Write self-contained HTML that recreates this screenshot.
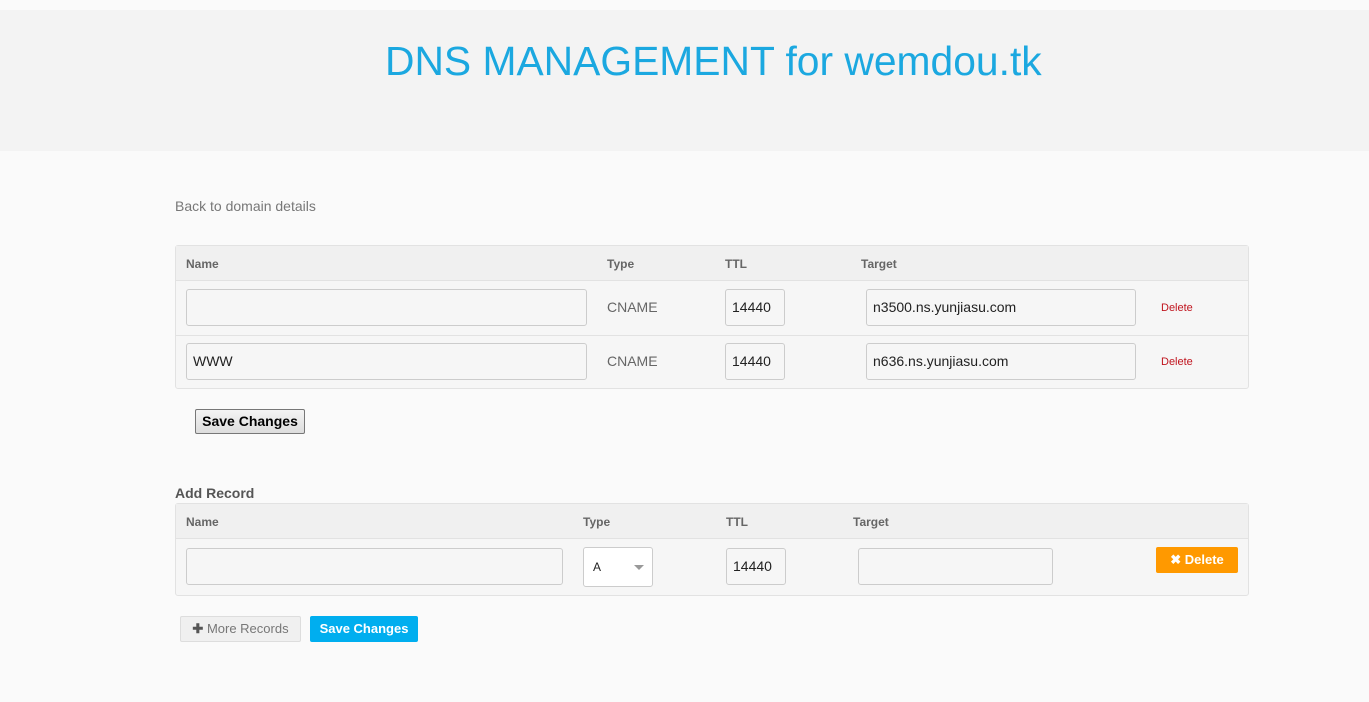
<!DOCTYPE html>
<html><head><style>
*{box-sizing:border-box;margin:0;padding:0}
body{width:1369px;height:702px;background:#fafafa;font-family:"Liberation Sans",sans-serif;position:relative;overflow:hidden}
.a{position:absolute}
.hdr{left:0;top:10px;width:1369px;height:141px;background:#f3f3f3}
h1{position:absolute;left:385px;width:660px;top:38px;white-space:nowrap;font-weight:normal;font-size:40.8px;color:#1ba8e0;font-family:"Liberation Sans",sans-serif}
.tbl{left:175px;width:1074px;border:1px solid #e2e2e2;border-radius:3px;background:#f6f6f6}
.th{position:absolute;left:0;right:0;top:0;height:35px;background:#f0f0f0;border-bottom:1px solid #e2e2e2}
.lbl{font-size:12px;color:#666;font-weight:bold}
.inp{position:absolute;border:1px solid #ccc;border-radius:3px;background:#f6f6f6;font-size:14px;color:#222;padding-left:6px;line-height:35px}
.cn{font-size:14px;color:#666}
.del{font-size:11px;color:#c0141e}
</style></head><body>
<div class="a hdr"></div>
<h1>DNS MANAGEMENT for wemdou.tk</h1>
<div class="a" style="left:175px;top:198px;font-size:14px;color:#777">Back to domain details</div>

<div class="a tbl" style="top:245px;height:144px">
 <div class="th"></div>
 <div style="position:absolute;left:0;right:0;top:89px;border-top:1px solid #e2e2e2"></div>
 <div class="a lbl" style="left:10px;top:11px">Name</div>
 <div class="a lbl" style="left:431px;top:11px">Type</div>
 <div class="a lbl" style="left:549px;top:11px">TTL</div>
 <div class="a lbl" style="left:685px;top:11px">Target</div>
 <div class="inp" style="left:10px;top:43px;width:401px;height:37px"></div>
 <div class="a cn" style="left:431px;top:53px">CNAME</div>
 <div class="inp" style="left:549px;top:43px;width:60px;height:37px">14440</div>
 <div class="inp" style="left:690px;top:43px;width:270px;height:37px">n3500.ns.yunjiasu.com</div>
 <div class="a del" style="left:985px;top:56px">Delete</div>
 <div class="inp" style="left:10px;top:97px;width:401px;height:37px">WWW</div>
 <div class="a cn" style="left:431px;top:107px">CNAME</div>
 <div class="inp" style="left:549px;top:97px;width:60px;height:37px">14440</div>
 <div class="inp" style="left:690px;top:97px;width:270px;height:37px">n636.ns.yunjiasu.com</div>
 <div class="a del" style="left:985px;top:110px">Delete</div>
</div>

<div class="a" style="left:195px;top:409px;width:110px;height:25px;border:1px solid #777;background:linear-gradient(#f4f4f4,#ddd);font-size:14px;font-weight:bold;color:#000;text-align:center;line-height:23px;border-radius:2px">Save Changes</div>

<div class="a" style="left:175px;top:485px;font-size:14px;font-weight:bold;color:#555">Add Record</div>
<div class="a tbl" style="top:503px;height:93px">
 <div class="th"></div>
 <div class="a lbl" style="left:10px;top:11px">Name</div>
 <div class="a lbl" style="left:407px;top:11px">Type</div>
 <div class="a lbl" style="left:550px;top:11px">TTL</div>
 <div class="a lbl" style="left:677px;top:11px">Target</div>
 <div class="inp" style="left:10px;top:44px;width:377px;height:37px"></div>
 <div class="inp" style="left:407px;top:43px;width:70px;height:40px;background:#fff;font-size:12px;line-height:38px;padding-left:9px">A<span style="position:absolute;left:50px;top:17px;border:5px solid transparent;border-top-color:#999;border-bottom:0"></span></div>
 <div class="inp" style="left:550px;top:44px;width:60px;height:37px">14440</div>
 <div class="inp" style="left:682px;top:44px;width:195px;height:37px"></div>
 <div class="a" style="left:980px;top:43px;width:82px;height:26px;background:#f90;border-radius:2px;color:#fff;font-size:13px;font-weight:bold;text-align:center;line-height:26px">✖ Delete</div>
</div>

<div class="a" style="left:180px;top:616px;width:121px;height:26px;background:#f0f0f0;border:1px solid #ddd;border-radius:2px;color:#777;font-size:13px;text-align:center;line-height:24px"><b style="color:#555">✚</b> More Records</div>
<div class="a" style="left:310px;top:616px;width:108px;height:26px;background:#00aeef;border-radius:2px;color:#fff;font-size:13px;font-weight:bold;text-align:center;line-height:26px">Save Changes</div>
</body></html>
